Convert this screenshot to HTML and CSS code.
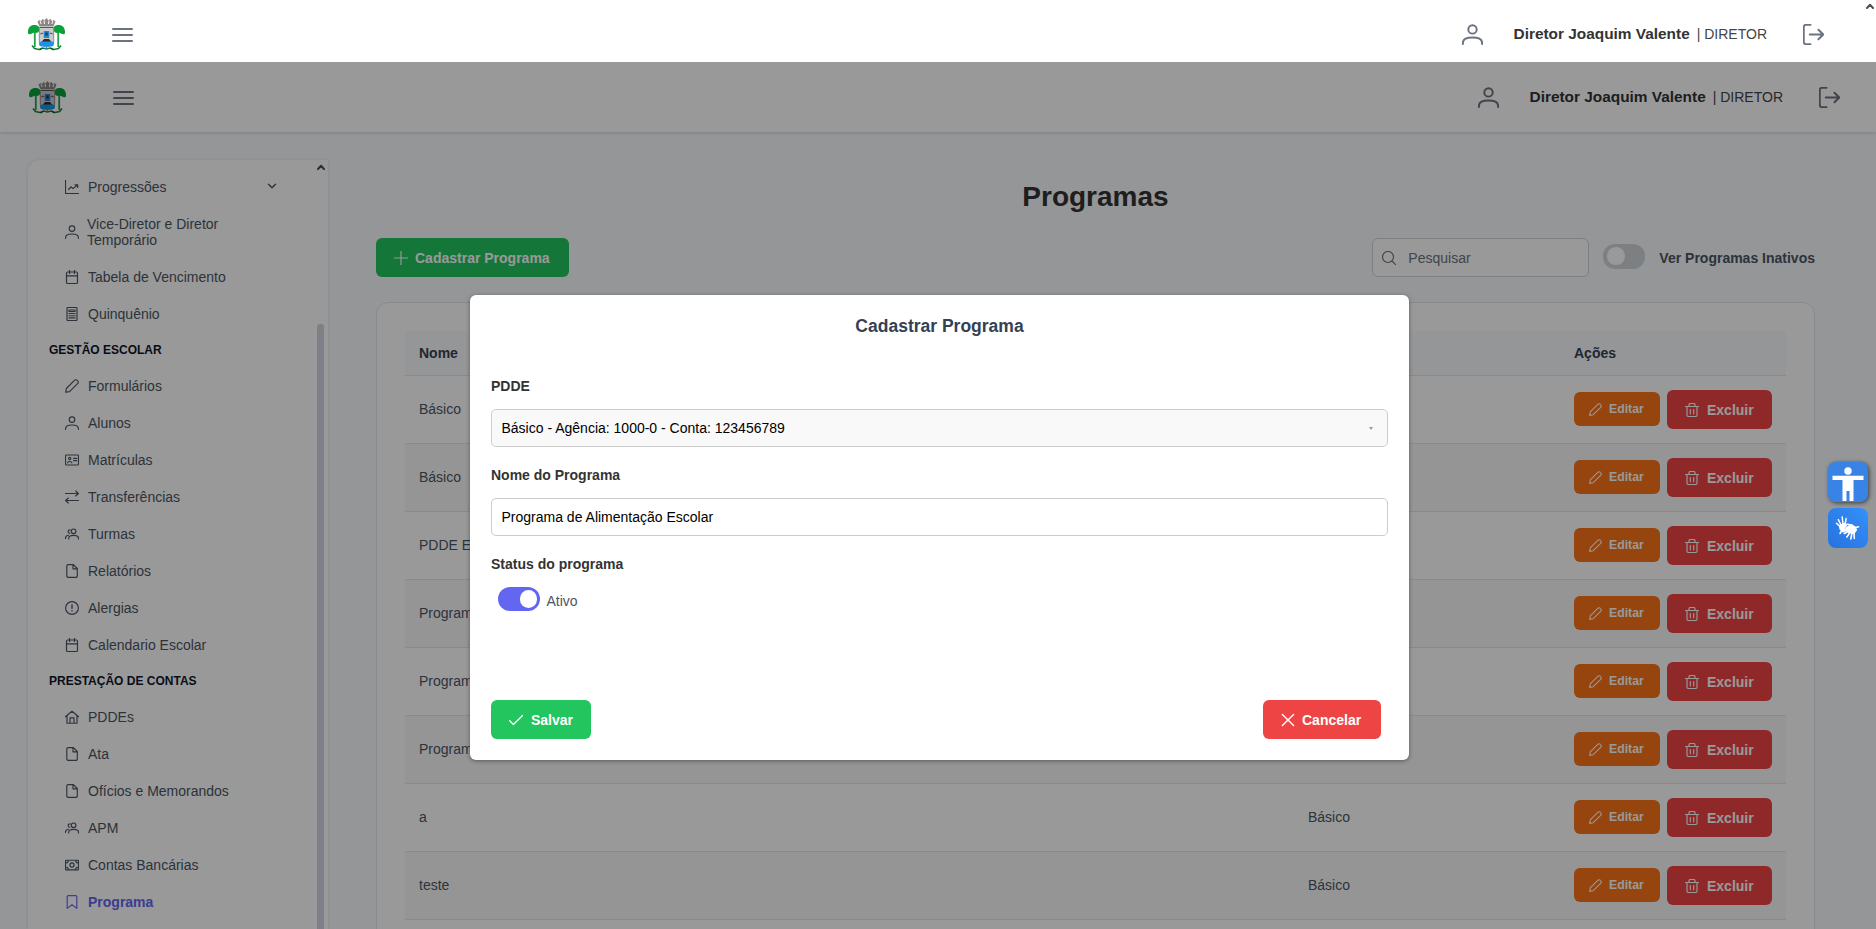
FILE: index.html
```html
<!DOCTYPE html>
<html lang="pt-BR">
<head>
<meta charset="utf-8">
<title>Programas</title>
<link rel="stylesheet" href="styles.css">
</head>
<body>
<svg class="sprite" aria-hidden="true">
  <symbol id="i-crest" viewBox="0 0 37 33">
    <path d="M9.500 3.500l2-1.600 1.500 1 1.700-1.800 2 1.200L18.500 0l1.800 2.300 2-1.200 1.700 1.800 1.500-1 2 1.600-2 5h-14z" fill="#8b8784"/>
    <path d="M12 3l1.200 3M16 2.500l.5 3.500M21 2.500l-.5 3.500M25 3l-1.200 3" stroke="#f4f4f4" stroke-width="1.100"/>
    <path d="M0 15c-.3-4 1.500-7.500 5.500-8C9 6.500 11.500 8 11.500 11c0 2.500-1.500 4-4 4L6 14.800C4 15 3 17 .5 16zM37 15c.3-4-1.500-7.500-5.500-8-3.500-.5-6 1-6 4 0 2.500 1.500 4 4 4l1.500-.2c2 .2 3 2.200 5.500 1.200z" fill="#0aa03a"/>
    <path d="M6.800 14v15M30.200 14v15" stroke="#1fa548" stroke-width="1.800"/>
    <path d="M11.300 9.500h14.400v13.500c0 4-3.500 5-7.200 6-3.700-1-7.200-2-7.200-6z" fill="#cbc9cb" stroke="#77757a" stroke-width=".8"/>
    <path d="M12 9.500h13" stroke="#555" stroke-width="1"/>
    <path d="M15.800 13h5.400v7h-5.400z" fill="#2585c4"/>
    <path d="M17.300 14.500h2.400v3h-2.400z" fill="#14415f"/>
    <path d="M12.300 16l1.800-1 1.200 1M21.700 16l1.200-1 1.800 1" stroke="#444" fill="none"/>
    <path d="M13.500 24l2.500-3h5l2.500 3z" fill="#33291f"/>
    <rect x="11" y="23.500" width="15" height="5" rx="2.400" fill="#1b94e8"/>
    <path d="M4 27.500l2.500 3 4.500 1 4-1.500 3.500 1 3.500-1 4 1.500 4.500-1 2.500-3" fill="none" stroke="#19803a" stroke-width="1.600"/>
    <path d="M11.500 32l3-2M25.500 32l-3-2" stroke="#234a26" stroke-width="1.300"/>
    <path d="M18.500 28v3" stroke="#1b94e8"/>
  </symbol>
  <symbol id="i-bars" viewBox="0 0 21 21"><path d="M1 4h19M1 10h19M1 16h19"/></symbol>
  <symbol id="i-user" viewBox="0 0 14 14"><circle cx="7" cy="3.600" r="2.800"/><path d="M.6 13.300v-.8C.6 10 3 9 7 9s6.400 1 6.400 3.500v.8"/></symbol>
  <symbol id="i-out" viewBox="0 0 14 14"><path d="M5 13.500H2A1.500 1.500 0 0 1 .5 12V2A1.500 1.500 0 0 1 2 .5h3M4.500 7h9M10.300 3.800L13.500 7l-3.200 3.200"/></symbol>
  <symbol id="i-chart" viewBox="0 0 14 14"><path d="M.5.2v13.300h13.300M3.500 9.500L6 6.800l2 1.800 4.500-3.600M10 4.800h2.700v2.700"/></symbol>
  <symbol id="i-cal" viewBox="0 0 14 14"><rect x="1.500" y="2" width="11" height="11.500" rx="1.200"/><path d="M1.500 5.800h11M4.500 0v3.500M9.500 0v3.500"/></symbol>
  <symbol id="i-calc" viewBox="0 0 14 14"><rect x="2" y=".5" width="10" height="13" rx=".9"/><path d="M4 3h6v1.500H4zM4 6.500h1.500M6.300 6.500h1.500M8.600 6.500h1.500M4 8.700h1.500M6.300 8.700h1.500M8.600 8.700h1.500M4 10.900h1.500M6.300 10.900h3.800"/></symbol>
  <symbol id="i-pencil" viewBox="0 0 14 14"><path d="M.7 13.300l.7-3.800 8-8.100a2 2 0 0 1 2.900 0l.3.300a2 2 0 0 1 0 2.900l-8.100 8z"/></symbol>
  <symbol id="i-card" viewBox="0 0 14 14"><rect x=".5" y="2" width="13" height="10" rx=".8"/><circle cx="4.700" cy="5.500" r="1.100"/><path d="M2.500 9.800c.3-1.800 4.100-1.800 4.400 0M8.500 5.300h3.300M8.500 7.600h3.300"/></symbol>
  <symbol id="i-swap" viewBox="0 0 14 14"><path d="M.3 3.500h13M10.700 1l2.700 2.500L10.700 6M13.700 10.500H.7M3.300 8L.6 10.500 3.300 13"/></symbol>
  <symbol id="i-users" viewBox="0 0 14 14"><circle cx="8.600" cy="4.300" r="2.300"/><path d="M3.700 12v-.6c0-2 2-3 5-3s4.800 1 4.800 3v.6M5 2.900a1.700 1.700 0 1 0-.3 3.400M.4 11.500c0-2 1-3.100 3.100-3.300"/></symbol>
  <symbol id="i-file" viewBox="0 0 14 14"><path d="M1.800 12V2A1.400 1.400 0 0 1 3.200.6h5.200L12.300 4.500V12a1.400 1.400 0 0 1-1.400 1.400H3.200A1.400 1.400 0 0 1 1.800 12zM8 .8v4h4.200"/></symbol>
  <symbol id="i-alert" viewBox="0 0 14 14"><circle cx="7" cy="7" r="6.400"/><path d="M7 4v3.200M7 9.600v.3" stroke-width="1.400"/></symbol>
  <symbol id="i-home" viewBox="0 0 14 14"><path d="M.4 6.800L7 1.200l6.600 5.600M2 5.800v7.400h10V5.800M5 13V7.800h4V13"/></symbol>
  <symbol id="i-money" viewBox="0 0 14 14"><rect x=".5" y="2.200" width="13" height="9.600" rx=".6"/><circle cx="7" cy="7" r="2.100"/><path d="M1 4.800c1.600 0 2.300-.8 2.300-2.300M13 4.800c-1.600 0-2.300-.8-2.300-2.300M1 9.200c1.600 0 2.300.8 2.300 2.300M13 9.200c-1.600 0-2.300.8-2.300 2.300"/></symbol>
  <symbol id="i-mark" viewBox="0 0 14 14"><path d="M2.200 13.400V1.500a.9.900 0 0 1 .9-.9h7.800a.9.900 0 0 1 .9.900v11.900L7 9.800z"/></symbol>
  <symbol id="i-down" viewBox="0 0 14 14"><path d="M3.500 5.200L7 8.700l3.500-3.500"/></symbol>
  <symbol id="i-plus" viewBox="0 0 14 14"><path d="M7 .3v13.400M.3 7h13.400"/></symbol>
  <symbol id="i-search" viewBox="0 0 14 14"><circle cx="6" cy="6" r="5.500"/><path d="M10 10l3.700 3.700"/></symbol>
  <symbol id="i-trash" viewBox="0 0 14 14"><path d="M.4 3.500h13.200M2 3.600V12a1.500 1.500 0 0 0 1.500 1.500h7A1.500 1.500 0 0 0 12 12V3.600M4 3.400V1.700A1.200 1.200 0 0 1 5.200.5h3.600A1.200 1.200 0 0 1 10 1.700v1.700M5.300 6.500v4.300M8.700 6.500v4.300"/></symbol>
  <symbol id="i-check" viewBox="0 0 14 14"><path d="M.4 7.500l4 4 9.200-9"/></symbol>
  <symbol id="i-x" viewBox="0 0 14 14"><path d="M1.400 1.400l11.200 11.200M12.600 1.400L1.400 12.600"/></symbol>
  <symbol id="i-arrow" viewBox="0 0 8 6"><path d="M1 5l3-3.200L7 5"/></symbol>
</svg>

<header class="topbar">
  <svg class="crest"><use href="#i-crest"/></svg>
  <svg class="ico ico-lg"><use href="#i-bars"/></svg>
  <div class="account">
    <svg class="ico ico-user"><use href="#i-user"/></svg>
    <span class="who"><b>Diretor Joaquim Valente</b><span>| DIRETOR</span></span>
    <svg class="ico ico-out"><use href="#i-out"/></svg>
  </div>
  <svg class="ico page-arrow"><use href="#i-arrow"/></svg>
</header>

<div class="stage">
  <header class="topbar topbar-app">
    <svg class="crest"><use href="#i-crest"/></svg>
    <svg class="ico ico-lg"><use href="#i-bars"/></svg>
    <div class="account">
      <svg class="ico ico-user"><use href="#i-user"/></svg>
      <span class="who"><b>Diretor Joaquim Valente</b><span>| DIRETOR</span></span>
      <svg class="ico ico-out"><use href="#i-out"/></svg>
    </div>
  </header>

  <div class="columns">
    <nav class="sidebar">
      <div class="menu">
        <a class="item"><svg class="ico"><use href="#i-chart"/></svg><span>Progressões</span><svg class="ico chev"><use href="#i-down"/></svg></a>
        <a class="item item-two"><svg class="ico"><use href="#i-user"/></svg><span>Vice-Diretor e Diretor Temporário</span></a>
        <a class="item"><svg class="ico"><use href="#i-cal"/></svg><span>Tabela de Vencimento</span></a>
        <a class="item"><svg class="ico"><use href="#i-calc"/></svg><span>Quinquênio</span></a>
        <div class="group">GESTÃO ESCOLAR</div>
        <a class="item"><svg class="ico"><use href="#i-pencil"/></svg><span>Formulários</span></a>
        <a class="item"><svg class="ico"><use href="#i-user"/></svg><span>Alunos</span></a>
        <a class="item"><svg class="ico"><use href="#i-card"/></svg><span>Matrículas</span></a>
        <a class="item"><svg class="ico"><use href="#i-swap"/></svg><span>Transferências</span></a>
        <a class="item"><svg class="ico"><use href="#i-users"/></svg><span>Turmas</span></a>
        <a class="item"><svg class="ico"><use href="#i-file"/></svg><span>Relatórios</span></a>
        <a class="item"><svg class="ico"><use href="#i-alert"/></svg><span>Alergias</span></a>
        <a class="item"><svg class="ico"><use href="#i-cal"/></svg><span>Calendario Escolar</span></a>
        <div class="group">PRESTAÇÃO DE CONTAS</div>
        <a class="item"><svg class="ico"><use href="#i-home"/></svg><span>PDDEs</span></a>
        <a class="item"><svg class="ico"><use href="#i-file"/></svg><span>Ata</span></a>
        <a class="item"><svg class="ico"><use href="#i-file"/></svg><span>Ofícios e Memorandos</span></a>
        <a class="item"><svg class="ico"><use href="#i-users"/></svg><span>APM</span></a>
        <a class="item"><svg class="ico"><use href="#i-money"/></svg><span>Contas Bancárias</span></a>
        <a class="item active"><svg class="ico"><use href="#i-mark"/></svg><span>Programa</span></a>
      </div>
      <div class="track"><svg class="ico track-arrow"><use href="#i-arrow"/></svg><div class="thumb"></div></div>
    </nav>

    <main class="main">
      <h1>Programas</h1>
      <div class="tools">
        <button class="btn green add"><svg class="ico"><use href="#i-plus"/></svg>Cadastrar Programa</button>
        <div class="search"><svg class="ico"><use href="#i-search"/></svg><span>Pesquisar</span></div>
        <div class="switch"><i></i></div>
        <b class="switch-label">Ver Programas Inativos</b>
      </div>
      <section class="card">
        <table>
          <colgroup><col class="c-name"><col class="c-pdde"><col class="c-act"></colgroup>
          <thead><tr><th>Nome</th><th></th><th>Ações</th></tr></thead>
          <tbody>
            <tr><td>Básico</td><td></td><td><div class="acts"><button class="btn sm orange"><svg class="ico"><use href="#i-pencil"/></svg>Editar</button><button class="btn red"><svg class="ico"><use href="#i-trash"/></svg>Excluir</button></div></td></tr>
            <tr><td>Básico</td><td></td><td><div class="acts"><button class="btn sm orange"><svg class="ico"><use href="#i-pencil"/></svg>Editar</button><button class="btn red"><svg class="ico"><use href="#i-trash"/></svg>Excluir</button></div></td></tr>
            <tr><td>PDDE E</td><td></td><td><div class="acts"><button class="btn sm orange"><svg class="ico"><use href="#i-pencil"/></svg>Editar</button><button class="btn red"><svg class="ico"><use href="#i-trash"/></svg>Excluir</button></div></td></tr>
            <tr><td>Programa</td><td></td><td><div class="acts"><button class="btn sm orange"><svg class="ico"><use href="#i-pencil"/></svg>Editar</button><button class="btn red"><svg class="ico"><use href="#i-trash"/></svg>Excluir</button></div></td></tr>
            <tr><td>Programa</td><td></td><td><div class="acts"><button class="btn sm orange"><svg class="ico"><use href="#i-pencil"/></svg>Editar</button><button class="btn red"><svg class="ico"><use href="#i-trash"/></svg>Excluir</button></div></td></tr>
            <tr><td>Programa</td><td></td><td><div class="acts"><button class="btn sm orange"><svg class="ico"><use href="#i-pencil"/></svg>Editar</button><button class="btn red"><svg class="ico"><use href="#i-trash"/></svg>Excluir</button></div></td></tr>
            <tr><td>a</td><td>Básico</td><td><div class="acts"><button class="btn sm orange"><svg class="ico"><use href="#i-pencil"/></svg>Editar</button><button class="btn red"><svg class="ico"><use href="#i-trash"/></svg>Excluir</button></div></td></tr>
            <tr><td>teste</td><td>Básico</td><td><div class="acts"><button class="btn sm orange"><svg class="ico"><use href="#i-pencil"/></svg>Editar</button><button class="btn red"><svg class="ico"><use href="#i-trash"/></svg>Excluir</button></div></td></tr>
          </tbody>
        </table>
      </section>
    </main>
  </div>

  <div class="overlay">
    <div class="modal">
      <h2>Cadastrar Programa</h2>
      <label>PDDE</label>
      <div class="field select"><span>Básico - Agência: 1000-0 - Conta: 123456789</span><i class="caret"></i></div>
      <label>Nome do Programa</label>
      <div class="field">Programa de Alimentação Escolar</div>
      <label>Status do programa</label>
      <div class="status"><div class="switch on"><i></i></div><span>Ativo</span></div>
      <div class="modal-foot">
        <button class="btn green save"><svg class="ico"><use href="#i-check"/></svg>Salvar</button>
        <button class="btn red cancel"><svg class="ico"><use href="#i-x"/></svg>Cancelar</button>
      </div>
    </div>
  </div>

  <div class="widgets">
    <div class="widget access">
      <svg viewBox="0 0 40 40"><circle cx="20" cy="9" r="3.700" fill="#fff"/><path d="M4.500 13.700h31v4.200h-10V39h-4V29h-3v10h-4V17.900h-10z" fill="#fff"/></svg>
    </div>
    <div class="widget hands">
      <svg viewBox="0 0 40 40" fill="none" stroke="#fff" stroke-linecap="round" stroke-linejoin="round">
        <path d="M11.500 17.500l5-2.500 2 2.500-1.500 2 .5 3.500-2.500 1-3-3z" fill="#fff" stroke-width="1.200"/>
        <path d="M12 18.500l-3.500-3.200M13 17l-2.700-5.300M15 16l-.8-7M17.200 16.500l.9-6M13.500 23l-1.500 2.500" stroke-width="1.500"/>
        <path d="M18.500 19.500l4.500-2.700 4 2 1.500 3.200-2.500 3.500-5-.8-2.500-2z" fill="#fff" stroke-width="1.200"/>
        <path d="M24 17l-5-.8M28 19.500l2.500-.7M20 23.500l-3.700 2M22 24.500l-3.200 4.500M24 25l-1.200 6M26 25l.3 5.500" stroke-width="1.600"/>
      </svg>
    </div>
  </div>
</div>
</body>
</html>
```
FILE: styles.css
```css
* { box-sizing: border-box; }
body {
  margin: 0;
  height: 929px;
  overflow: hidden;
  display: flex;
  flex-direction: column;
  font-family: "Liberation Sans", Arial, sans-serif;
  font-size: 14px;
  line-height: 16px;
  color: #4b5563;
  background: #f8fafc;
}
.sprite { position: absolute; width: 0; height: 0; }
.ico {
  width: 14px;
  height: 14px;
  flex: none;
  fill: none;
  stroke: currentColor;
  stroke-width: 1.15;
  stroke-linecap: round;
  stroke-linejoin: round;
}

/* Top bars */
.topbar {
  position: relative;
  flex: none;
  height: 62px;
  padding: 0 52px 0 28px;
  display: flex;
  align-items: center;
  background: #fff;
  color: #6b7280;
}
.crest { width: 37px; height: 33px; margin: 7px 47px 0 0; flex: none; }
.ico-lg { width: 21px; height: 21px; margin-top: 8px; stroke-width: 2; }
.account { margin-left: auto; display: flex; align-items: center; padding-top: 7px; }
.ico-user, .ico-out { width: 21px; height: 21px; stroke-width: 1.3; }
.who { margin: 0 36px 0 30.5px; display: flex; align-items: baseline; color: #444; padding-bottom: 1px; }
.who b { font-size: 15.4px; color: #333; margin-right: 7px; }
.page-arrow { position: absolute; right: 2px; top: 3px; width: 8px; height: 6px; color: #505050; stroke-width: 2; }
.topbar-app { height: 70px; padding: 0 36px 0 29px; box-shadow: 0 1px 3px rgba(0,0,0,.15); }
.topbar-app .crest { margin-top: 0; }
.topbar-app .ico-lg { margin-top: 2px; }
.topbar-app .account { padding-top: 0; }

.stage { position: relative; flex: 1; min-height: 0; overflow: hidden; }
.columns { display: flex; padding: 28px 61px 0 28px; gap: 48px; }

/* Sidebar */
.sidebar {
  width: 300px;
  height: 769px;
  flex: none;
  display: flex;
  background: #fff;
  border-radius: 12px 0 0 0;
  box-shadow: 0 0 3px rgba(0,0,0,.13);
}
.menu { flex: 1; padding: 8px 0 0 21px; }
.item { height: 37px; padding: 0 41px 0 16px; display: flex; align-items: center; gap: 9px; }
.item span { flex: 1; }
.item-two { height: 53px; gap: 8px; }
.item-two span { flex: none; width: 150px; }
.active { color: #6366f1; font-weight: bold; }
.group { height: 35px; line-height: 37px; font-size: 12px; font-weight: bold; color: #0f172a; }
.chev { stroke-width: 1.4; margin: -2px -3px 0 0; }
.track { width: 11px; display: flex; flex-direction: column; }
.track-arrow { width: 8px; height: 6px; margin: 4px 0 154px 0; color: #505050; stroke-width: 2; }
.thumb { width: 7px; flex: 1; border-radius: 3px 3px 0 0; background: #d0d7e2; }

/* Main area */
.main { flex: 1; display: flex; flex-direction: column; }
h1 { margin: 21px 0 25px; height: 32px; line-height: 32px; font-size: 28px; text-align: center; color: #333; }
.tools { height: 39px; display: flex; align-items: center; }
.btn {
  height: 39px;
  padding: 0 18px;
  border: 0;
  border-radius: 6px;
  display: flex;
  align-items: center;
  gap: 8px;
  font: bold 14px "Liberation Sans", Arial, sans-serif;
  color: #fff;
}
.green { background: #22c55e; }
.red { background: #ef4444; }
.orange { background: #f97316; }
.add { width: 193px; padding-right: 0; gap: 7px; }
.search {
  width: 217px;
  height: 39px;
  margin-left: auto;
  padding-left: 9px;
  display: flex;
  align-items: center;
  gap: 12px;
  background: #fff;
  border: 1px solid #d1d5db;
  border-radius: 6px;
  color: #6b7280;
}
.switch {
  width: 42px;
  height: 24px;
  flex: none;
  margin: 0 14px;
  padding: 0 4px;
  display: flex;
  align-items: center;
  border-radius: 12px;
  background: #d1d5db;
}
.tools .switch { height: 25px; margin-bottom: 3px; }
.switch i { width: 17.5px; height: 17.5px; border-radius: 50%; background: #fff; }
.on { background: #6366f1; justify-content: flex-end; padding: 0 3px; }
.switch-label { white-space: nowrap; }
.card {
  height: 700px;
  margin-top: 25px;
  padding: 28px;
  background: #fff;
  border: 1px solid #dfe7ef;
  border-radius: 12px;
}
table { width: 1381px; table-layout: fixed; border-collapse: separate; border-spacing: 0; }
.c-name { width: 889px; }
.c-pdde { width: 266px; }
th, td { padding: 0 14px; text-align: left; border-bottom: 1px solid #e5e7eb; }
th { height: 45px; background: #f8fafc; color: #374151; }
td { height: 68px; padding-bottom: 2px; }
td:last-child { padding-bottom: 0; }
tbody tr:nth-child(even) { background: #f9f9f9; }
.acts { display: flex; align-items: center; gap: 7px; }
.acts .red { width: 105px; }
.acts .sm { width: 86px; height: 34px; padding: 0 15px; font-size: 12.25px; margin-bottom: 1px; gap: 7px; }
.sm .ico { width: 13px; height: 13px; }

/* Dialog */
.overlay {
  position: absolute;
  inset: 0;
  padding: 233px 0 0 470px;
  background: rgba(0,0,0,.4);
}
.modal {
  width: 939px;
  height: 465px;
  padding: 21px 21px 21px;
  display: flex;
  flex-direction: column;
  background: #fff;
  border-radius: 6px;
  box-shadow: 0 1px 4px rgba(0,0,0,.4);
}
h2 { margin: 0 0 41px; height: 21px; line-height: 21px; font-size: 17.5px; text-align: center; color: #334155; }
.modal label { height: 16px; font-weight: bold; color: #333; }
.modal h2 + label { margin: 0 0 15px; }
.field {
  height: 38px;
  padding: 0 14px 0 9.5px;
  display: flex;
  align-items: center;
  justify-content: space-between;
  border: 1px solid #ccc;
  border-radius: 5px;
  color: #000;
}
.select { background: #f9f9f9; }
.caret { border: 2.5px solid transparent; border-top: 3px solid #999; border-bottom: 0; }
.modal .field + label { margin: 20px 0 15px; }
.status { display: flex; align-items: center; height: 24px; }
.status .switch { margin: 0 6.5px 0 7px; }
.status span { padding-top: 3px; }
.modal-foot { margin-top: auto; padding-right: 7px; display: flex; justify-content: space-between; }
.save .ico, .cancel .ico { stroke-width: 1.4; }
.cancel { width: 118px; gap: 7px; }

/* Floating helpers */
.widgets { position: absolute; right: 8px; top: 400px; display: grid; gap: 6px; }
.widget { width: 40px; height: 40px; border-radius: 8px; }
.widget svg { width: 40px; height: 40px; display: block; }
.access { background: #3a83e6; box-shadow: 1px 1px 4px rgba(0,0,0,.6); }
.hands { background: linear-gradient(45deg, #2672dd, #3590fb); }
```
